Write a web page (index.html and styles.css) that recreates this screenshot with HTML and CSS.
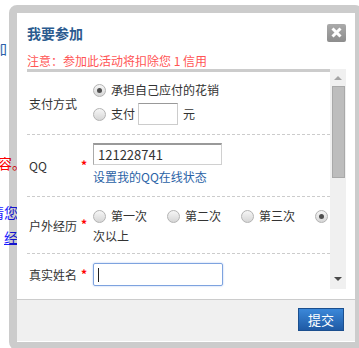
FILE: index.html
```html
<!DOCTYPE html>
<html lang="zh-CN">
<head>
    <meta charset="UTF-8">
    <title>我要参加</title>
    <link rel="stylesheet" href="styles.css">
</head>
<body>

    <!-- Page behind the dialog -->
    <div class="page">
        <div class="bg-line line-a">参加</div>
        <div class="bg-line line-b">内容。</div>
        <div class="bg-line line-c">请您</div>
        <div class="bg-line line-d"><a href="#">经验</a></div>
    </div>

    <!-- Dialog -->
    <div class="dialog">
        <div class="dlg-inner">
            <div class="dlg-head">
                <span class="dlg-title">我要参加</span>
                <a href="#" class="dlg-close">
                    <svg width="19" height="18" viewBox="0 0 19 18">
                        <path d="M5.5 4.5 L13.5 12.5 M13.5 4.5 L5.5 12.5" stroke="#fff" stroke-width="3" fill="none"/>
                    </svg>
                </a>
            </div>
            <div class="dlg-notice">注意：参加此活动将扣除您 1 信用</div>

            <div class="dlg-body">
                <div class="form">
                    <div class="row">
                        <div class="row-label"><span class="name">支付方式</span></div>
                        <div class="row-field pay">
                            <div class="line"><span class="radio on"></span>承担自己应付的花销</div>
                            <div class="line line-input"><span class="radio"></span>支付<input class="amount" type="text" value="">元</div>
                        </div>
                    </div>
                    <div class="row">
                        <div class="row-label"><span class="name">QQ</span><em class="req">*</em></div>
                        <div class="row-field qq">
                            <input class="textbox" type="text" value="121228741">
                            <a href="#" class="qq-link">设置我的QQ在线状态</a>
                        </div>
                    </div>
                    <div class="row">
                        <div class="row-label"><span class="name">户外经历</span><em class="req">*</em></div>
                        <div class="row-field exp"><span class="radio"></span><span class="opt">第一次</span><span class="radio"></span><span class="opt">第二次</span><span class="radio"></span><span class="opt">第三次</span><span class="radio on"></span><span class="opt">次以上</span></div>
                    </div>
                    <div class="row">
                        <div class="row-label"><span class="name">真实姓名</span><em class="req">*</em></div>
                        <div class="row-field name-field">
                            <div class="textbox focus"><span class="caret"></span></div>
                        </div>
                    </div>
                    <div class="row">
                        <div class="row-label"><span class="name">手机号码</span><em class="req">*</em></div>
                        <div class="row-field name-field">
                            <input class="textbox" type="text" value="">
                        </div>
                    </div>
                    <div class="row">
                        <div class="row-label"><span class="name">备注</span></div>
                        <div class="row-field name-field">
                            <input class="textbox" type="text" value="">
                        </div>
                    </div>
                </div>

                <!-- Scrollbar of the form -->
                <div class="scrollbar">
                    <span class="arrow-up"></span>
                    <span class="thumb"></span>
                    <span class="arrow-down"></span>
                </div>
            </div>

            <div class="dlg-foot">
                <button class="btn-submit">提交</button>
            </div>
        </div>
    </div>

</body>
</html>
```

FILE: styles.css
```css
html, body {
    margin: 0;
    padding: 0;
    height: 100%;
    overflow: hidden;
}

body {
    font-family: "Noto Sans CJK SC", "Liberation Sans", sans-serif;
    font-size: 12px;
    color: #333;
    background-color: #fff;
    position: relative;
}

a {
    text-decoration: none;
}

/* Page behind */
.page {
    font-size: 14px;
    line-height: 20px;
    white-space: nowrap;
}

.line-a {
    margin: 38px 0 0 -21px;
    color: #2b5fa8;
}

.line-b {
    margin: 95px 0 0 -16px;
    color: #f00;
}

.line-c {
    margin: 29px 0 0 -10px;
    color: #1a1aff;
}

.line-d {
    margin: 5px 0 0 4px;
}

.line-d a {
    color: #1a1aff;
    text-decoration: underline;
}

/* Dialog */
.dialog {
    position: absolute;
    left: 9px;
    top: 5px;
    border: 8px solid rgba(0, 0, 0, 0.2);
    border-radius: 8px;
}

.dlg-inner {
    width: 338px;
    height: 329px;
    background-color: #fff;
}

.dlg-head {
    display: flex;
    align-items: center;
    justify-content: space-between;
    height: 18px;
    padding: 11px 9px 0 10px;
}

.dlg-title {
    font-size: 14px;
    font-weight: bold;
    line-height: 18px;
    color: #2b5b8f;
}

.dlg-close {
    display: block;
    width: 19px;
    height: 18px;
    border-radius: 2px;
    background: linear-gradient(#aaa, #8d8d8d);
}

.dlg-close svg {
    display: block;
}

.dlg-notice {
    margin: 11px 0 0 10px;
    line-height: 16px;
    color: #f55;
}

.dlg-body {
    display: flex;
    height: 220px;
    margin: 0 9px 0 10px;
}

.form {
    width: 303px;
    border-top: 3px solid #ccc;
    overflow: hidden;
}

.row {
    display: grid;
    grid-template-columns: 66px 1fr;
    border-bottom: 1px dashed #ccc;
}

.row-label {
    display: flex;
    align-items: center;
    padding-left: 2px;
}

.row-label .name {
    width: 52px;
}

.req {
    font-style: normal;
    font-weight: bold;
    color: #f00;
    margin-top: -3px;
}

.row-field {
    margin-right: -4px;
    line-height: 20px;
}

.radio {
    display: inline-block;
    position: relative;
    width: 13px;
    height: 13px;
    box-sizing: border-box;
    border: 1px solid #b3b3b3;
    border-radius: 50%;
    background: linear-gradient(#f6f6f6, #d6d6d6);
    margin-right: 5px;
    vertical-align: -2px;
}

.radio.on::after {
    content: "";
    position: absolute;
    left: 3px;
    top: 3px;
    width: 5px;
    height: 5px;
    border-radius: 50%;
    background-color: #4f4f4f;
}

/* Payment row */
.pay {
    padding: 8px 0 9px;
}

.pay .line {
    display: flex;
    align-items: center;
    height: 20px;
}

.pay .line-input {
    height: 22px;
    margin-top: 3px;
}

.amount {
    width: 40px;
    height: 22px;
    box-sizing: border-box;
    margin: 0 5px 0 3px;
    border: 1px solid #ccc;
    border-top-color: #999;
    padding: 0 3px;
    font: inherit;
}

/* QQ row */
.qq {
    padding: 8px 0 11px;
}

.textbox {
    display: block;
    width: 129px;
    height: 22px;
    box-sizing: border-box;
    margin: 0;
    border: 1px solid #d0d0d0;
    border-top: 2px solid #999;
    border-left-color: #aaa;
    padding: 0 4px;
    font-family: inherit;
    font-size: 13px;
    color: #333;
}

.qq-link {
    display: block;
    margin-top: 4px;
    line-height: 16px;
    color: #2a62a6;
}

/* Experience row */
.exp {
    padding: 9px 0 7px;
}

.opt {
    margin-right: 20px;
}

/* Name rows */
.name-field {
    padding: 9px 0;
}

.textbox.focus {
    width: 130px;
    height: 23px;
    border: 1px solid #7ea3df;
    border-radius: 2px;
    box-shadow: 0 0 2px #a6c2f0;
    padding: 4px 4px;
}

.caret {
    display: block;
    width: 1px;
    height: 14px;
    background-color: #222;
}

/* Scrollbar */
.scrollbar {
    width: 16px;
    display: flex;
    flex-direction: column;
    align-items: center;
    padding: 7px 0 8px;
    box-sizing: border-box;
    background-color: #f0f0f0;
}

.arrow-up {
    border: 4px solid transparent;
    border-top: 0;
    border-bottom-color: #a5a5a5;
}

.thumb {
    width: 13px;
    height: 92px;
    margin: 6px 0 0 1px;
    box-sizing: border-box;
    border: 1px solid #a9a9a9;
    background-color: #bdbdbd;
}

.arrow-down {
    margin-top: auto;
    border: 4px solid transparent;
    border-bottom: 0;
    border-top-color: #4a4a4a;
}

/* Footer */
.dlg-foot {
    display: flex;
    justify-content: flex-end;
    align-items: flex-start;
    height: 42px;
    box-sizing: border-box;
    margin-top: 10px;
    padding: 8px 11px 0 0;
    border-top: 1px solid #ccc;
    background-color: #f0f0f0;
}

.btn-submit {
    width: 46px;
    height: 23px;
    padding: 0;
    border: 1px solid #1b4f8e;
    background: linear-gradient(#3b88d9, #1f5aa5);
    color: #fff;
    font-family: inherit;
    font-size: 13px;
    cursor: pointer;
}
```
